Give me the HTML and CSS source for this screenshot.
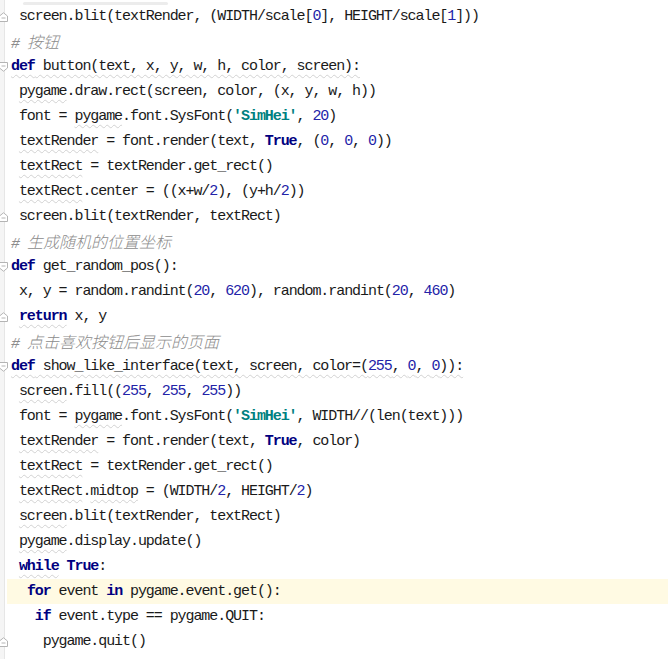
FILE: index.html
```html
<!DOCTYPE html>
<html>
<head>
<meta charset="utf-8">
<link rel="stylesheet" href="styles.css">
</head>
<body>
<div class="editor">
  <div class="line"><span class="gut"></span><span class="code ghost-row"><span class="ghost"></span></span></div>
  <div class="line"><span class="gut"><svg class="fold" viewBox="0 0 9 10"><path d="M0.5 9.5 V4 L4.5 0.8 L8.5 4 V9.5 Z"/><line x1="2.5" y1="6" x2="6.5" y2="6"/></svg></span><span class="code"> screen.blit(textRender, (WIDTH/scale[<span class="num">0</span>], HEIGHT/scale[<span class="num">1</span>]))</span></div>
  <div class="line"><span class="gut"></span><span class="code"><span class="cm"># <span class="cjk">按钮</span></span></span></div>
  <div class="line"><span class="gut"><svg class="fold" viewBox="0 0 9 10"><path d="M0.5 0.5 V6 L4.5 9.2 L8.5 6 V0.5 Z"/><line x1="2.5" y1="4" x2="6.5" y2="4"/></svg></span><span class="code"><span class="sq"><span class="kw">def</span> button(text, x, y, w, h, color, screen):</span></span></div>
  <div class="line"><span class="gut"></span><span class="code"> <span class="sq">pygame</span>.draw.rect(screen, color, (x, y, w, h))</span></div>
  <div class="line"><span class="gut"></span><span class="code"> font = <span class="sq">pygame</span>.font.SysFont(<span class="str">'SimHei'</span>, <span class="num">20</span>)</span></div>
  <div class="line"><span class="gut"></span><span class="code"> <span class="sq">textRender</span> = font.render(text, <span class="kw">True</span>, (<span class="num">0</span>, <span class="num">0</span>, <span class="num">0</span>))</span></div>
  <div class="line"><span class="gut"></span><span class="code"> <span class="sq">textRect</span> = textRender.get_rect()</span></div>
  <div class="line"><span class="gut"></span><span class="code"> <span class="sq">textRect</span>.center = ((x+w/<span class="num">2</span>), (y+h/<span class="num">2</span>))</span></div>
  <div class="line"><span class="gut"><svg class="fold" viewBox="0 0 9 10"><path d="M0.5 9.5 V4 L4.5 0.8 L8.5 4 V9.5 Z"/><line x1="2.5" y1="6" x2="6.5" y2="6"/></svg></span><span class="code"> screen.blit(textRender, textRect)</span></div>
  <div class="line"><span class="gut"></span><span class="code"><span class="cm"># <span class="cjk">生成随机的位置坐标</span></span></span></div>
  <div class="line"><span class="gut"><svg class="fold" viewBox="0 0 9 10"><path d="M0.5 0.5 V6 L4.5 9.2 L8.5 6 V0.5 Z"/><line x1="2.5" y1="4" x2="6.5" y2="4"/></svg></span><span class="code"><span class="kw">def</span> get_random_pos():</span></div>
  <div class="line"><span class="gut"></span><span class="code"> x, y = random.randint(<span class="num">20</span>, <span class="num">620</span>), random.randint(<span class="num">20</span>, <span class="num">460</span>)</span></div>
  <div class="line"><span class="gut"><svg class="fold" viewBox="0 0 9 10"><path d="M0.5 9.5 V4 L4.5 0.8 L8.5 4 V9.5 Z"/><line x1="2.5" y1="6" x2="6.5" y2="6"/></svg></span><span class="code"> <span class="kw sq">return</span> x, y</span></div>
  <div class="line"><span class="gut"></span><span class="code"><span class="cm"># <span class="cjk">点击喜欢按钮后显示的页面</span></span></span></div>
  <div class="line"><span class="gut"><svg class="fold" viewBox="0 0 9 10"><path d="M0.5 0.5 V6 L4.5 9.2 L8.5 6 V0.5 Z"/><line x1="2.5" y1="4" x2="6.5" y2="4"/></svg></span><span class="code"><span class="sq"><span class="kw">def</span> show_like_interface(text, screen, color=(<span class="num">255</span>, <span class="num">0</span>, <span class="num">0</span>)):</span></span></div>
  <div class="line"><span class="gut"></span><span class="code"> <span class="sq">screen</span>.fill((<span class="num">255</span>, <span class="num">255</span>, <span class="num">255</span>))</span></div>
  <div class="line"><span class="gut"></span><span class="code"> font = <span class="sq">pygame</span>.font.SysFont(<span class="str">'SimHei'</span>, WIDTH//(len(text)))</span></div>
  <div class="line"><span class="gut"></span><span class="code"> <span class="sq">textRender</span> = font.render(text, <span class="kw">True</span>, color)</span></div>
  <div class="line"><span class="gut"></span><span class="code"> <span class="sq">textRect</span> = textRender.get_rect()</span></div>
  <div class="line"><span class="gut"></span><span class="code"> <span class="sq">textRect</span>.<span class="sq">midtop</span> = (WIDTH/<span class="num">2</span>, HEIGHT/<span class="num">2</span>)</span></div>
  <div class="line"><span class="gut"></span><span class="code"> <span class="sq">screen</span>.blit(textRender, textRect)</span></div>
  <div class="line"><span class="gut"></span><span class="code"> <span class="sq">pygame</span>.display.update()</span></div>
  <div class="line"><span class="gut"></span><span class="code"> <span class="kw sq">while</span> <span class="kw">True</span>:</span></div>
  <div class="line caret"><span class="gut"></span><span class="code">  <span class="kw">for</span> event <span class="kw">in</span> pygame.event.get():</span></div>
  <div class="line"><span class="gut"></span><span class="code">   <span class="kw">if</span> event.type == pygame.QUIT:</span></div>
  <div class="line"><span class="gut"><svg class="fold" viewBox="0 0 9 10"><path d="M0.5 9.5 V4 L4.5 0.8 L8.5 4 V9.5 Z"/><line x1="2.5" y1="6" x2="6.5" y2="6"/></svg></span><span class="code">    pygame.quit()</span></div>
</div>
</body>
</html>
```
FILE: styles.css
```css
html, body {
  margin: 0;
  padding: 0;
  background: #ffffff;
  overflow: hidden;
}

.editor {
  margin-top: -21px;
  min-height: 700px;
  background: linear-gradient(to right, #f5f5f5 0, #f5f5f5 4px, #e6e6e6 4px, #e6e6e6 5px, #ffffff 5px);
  font-family: "Liberation Mono", monospace;
  font-size: 15px;
  letter-spacing: -1.07px;
  color: #1a1a1a;
}

.line {
  display: flex;
  height: 25px;
  line-height: 25px;
}

.gut {
  flex: none;
  width: 9px;
  display: flex;
  align-items: center;
}

.fold {
  width: 9px;
  height: 10px;
  margin-left: -1px;
}

.fold path {
  fill: #ffffff;
  stroke: #b4b4b4;
  stroke-width: 1;
}

.fold line {
  stroke: #b4b4b4;
  stroke-width: 1;
}

.code {
  flex: 1;
  padding-left: 2px;
  white-space: pre;
}

.ghost-row {
  display: flex;
  align-items: flex-end;
}

.ghost {
  display: block;
  width: 145px;
  height: 3px;
  margin-left: 12px;
  margin-bottom: -1px;
  background: #ececec;
  border-radius: 2px;
}

.caret .code {
  background: #fffae3;
  margin-left: -2px;
  padding-left: 4px;
}

.kw {
  color: #000080;
  font-weight: bold;
}

.str {
  color: #008080;
  font-weight: bold;
}

.num {
  color: #2323a8;
}

.cm {
  color: #8c8c8c;
  font-style: italic;
}

.cjk {
  font-family: "Noto Sans CJK SC", sans-serif;
  font-size: 16px;
  letter-spacing: 0;
  font-weight: 300;
}

.sq {
  text-decoration: underline wavy #d2d2d2;
  text-decoration-thickness: 1px;
  text-underline-offset: 4px;
}
```
